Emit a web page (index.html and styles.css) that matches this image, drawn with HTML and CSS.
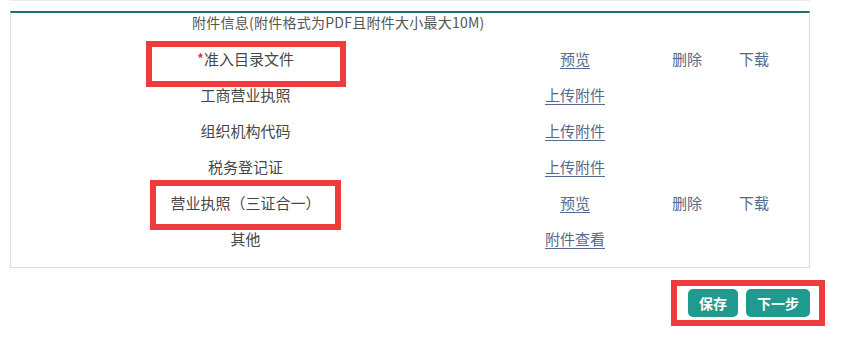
FILE: index.html
```html
<!DOCTYPE html>
<html lang="zh-CN">
<head>
    <meta charset="utf-8">
    <title>附件信息</title>
    <link rel="stylesheet" href="styles.css">
</head>
<body>
    <div class="page">
        <div class="top-rule"></div>
        <div class="panel">
            <div class="att-head">附件信息(附件格式为PDF且附件大小最大10M)</div>
            <div class="att-grid">
                <div class="cell name"><span class="req">*</span>准入目录文件</div>
                <div class="cell"><a href="#">预览</a></div>
                <div class="cell"><span class="op">删除</span></div>
                <div class="cell"><span class="op">下载</span></div>

                <div class="cell name">工商营业执照</div>
                <div class="cell"><a href="#">上传附件</a></div>
                <div class="cell"></div>
                <div class="cell"></div>

                <div class="cell name">组织机构代码</div>
                <div class="cell"><a href="#">上传附件</a></div>
                <div class="cell"></div>
                <div class="cell"></div>

                <div class="cell name">税务登记证</div>
                <div class="cell"><a href="#">上传附件</a></div>
                <div class="cell"></div>
                <div class="cell"></div>

                <div class="cell name">营业执照（三证合一）</div>
                <div class="cell"><a href="#">预览</a></div>
                <div class="cell"><span class="op">删除</span></div>
                <div class="cell"><span class="op">下载</span></div>

                <div class="cell name">其他</div>
                <div class="cell"><a href="#">附件查看</a></div>
                <div class="cell"></div>
                <div class="cell"></div>
            </div>
        </div>
        <div class="actions">
            <button class="btn">保存</button>
            <button class="btn">下一步</button>
        </div>

        <!-- annotation boxes drawn over the page -->
        <span class="mark mark-1"></span>
        <span class="mark mark-2"></span>
        <span class="mark mark-3"></span>
    </div>
</body>
</html>
```

FILE: styles.css
```css
body {
    margin: 0;
    min-height: 337px;
    background: #fff;
    font-family: "Noto Sans CJK SC", "Noto Sans", sans-serif;
    font-size: 15px;
    color: #444;
}
.page {
    position: relative;
    width: 800px;
    margin-left: 10px;
    padding-bottom: 20px;
}
.top-rule {
    height: 1px;
    background: #ececec;
}
.panel {
    box-sizing: border-box;
    width: 800px;
    margin-top: 10px;
    border: 1px solid #dcdcdc;
    border-top: 2px solid #236e68;
    padding-bottom: 10px;
}
.att-head {
    padding-left: 181px;
    font-size: 14px;
    letter-spacing: 0.25px;
    line-height: 18px;
    margin-bottom: 10px;
    color: #555;
}
.att-grid {
    display: grid;
    grid-template-columns: 469px 190px 34px 100px;
    grid-auto-rows: 36px;
}
.cell {
    display: flex;
    align-items: center;
    justify-content: center;
    white-space: nowrap;
    line-height: 20px;
}
.cell.name {
    color: #474747;
}
.req {
    color: #d42020;
}
a {
    color: #55698c;
    text-decoration: underline;
    text-underline-offset: 3px;
}
.op {
    color: #55698c;
}
.actions {
    display: flex;
    justify-content: flex-end;
    gap: 8px;
    margin-top: 21px;
}
.btn {
    height: 28px;
    padding: 0 11px;
    border: none;
    border-radius: 5px;
    background: #1f9a8e;
    color: #fff;
    font-family: "Noto Sans CJK SC", sans-serif;
    font-size: 14px;
    font-weight: 700;
}
.mark {
    position: absolute;
    box-sizing: border-box;
    border: 6px solid #ef3b3b;
}
.mark-1 {
    left: 136px;
    top: 41px;
    width: 200px;
    height: 46px;
}
.mark-2 {
    left: 140px;
    top: 180px;
    width: 191px;
    height: 50px;
}
.mark-3 {
    left: 661px;
    top: 280px;
    width: 154px;
    height: 46px;
}
```
